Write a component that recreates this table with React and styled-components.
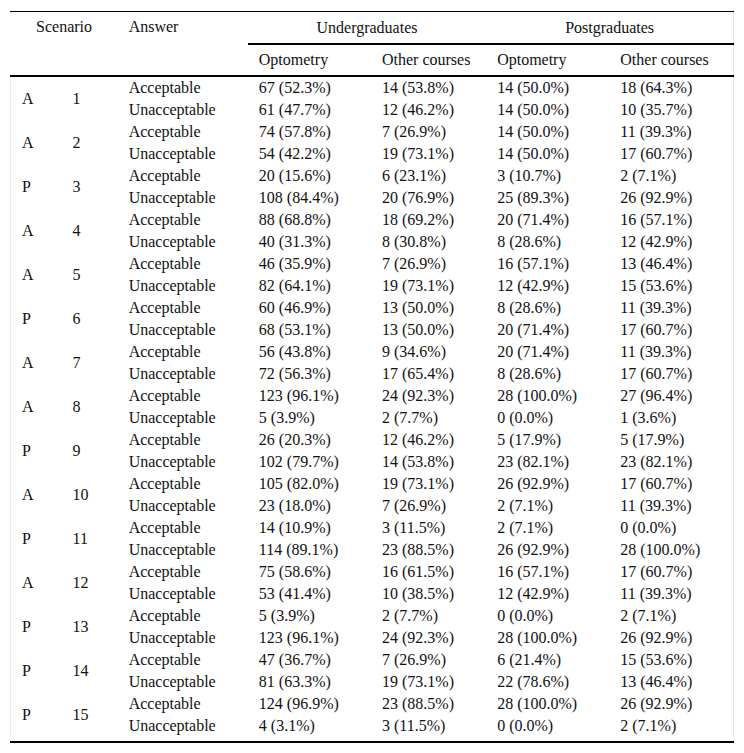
import React from 'react';
import styled, {createGlobalStyle} from 'styled-components';

const GlobalStyle = createGlobalStyle`
  body {
    margin: 0;
    background: #fff;
    font-family: "Liberation Serif", "Times New Roman", serif;
    color: #111;
  }
`;

const rows = [
  ['A', 1, ['67 (52.3%)', '14 (53.8%)', '14 (50.0%)', '18 (64.3%)'], ['61 (47.7%)', '12 (46.2%)', '14 (50.0%)', '10 (35.7%)']],
  ['A', 2, ['74 (57.8%)', '7 (26.9%)', '14 (50.0%)', '11 (39.3%)'], ['54 (42.2%)', '19 (73.1%)', '14 (50.0%)', '17 (60.7%)']],
  ['P', 3, ['20 (15.6%)', '6 (23.1%)', '3 (10.7%)', '2 (7.1%)'], ['108 (84.4%)', '20 (76.9%)', '25 (89.3%)', '26 (92.9%)']],
  ['A', 4, ['88 (68.8%)', '18 (69.2%)', '20 (71.4%)', '16 (57.1%)'], ['40 (31.3%)', '8 (30.8%)', '8 (28.6%)', '12 (42.9%)']],
  ['A', 5, ['46 (35.9%)', '7 (26.9%)', '16 (57.1%)', '13 (46.4%)'], ['82 (64.1%)', '19 (73.1%)', '12 (42.9%)', '15 (53.6%)']],
  ['P', 6, ['60 (46.9%)', '13 (50.0%)', '8 (28.6%)', '11 (39.3%)'], ['68 (53.1%)', '13 (50.0%)', '20 (71.4%)', '17 (60.7%)']],
  ['A', 7, ['56 (43.8%)', '9 (34.6%)', '20 (71.4%)', '11 (39.3%)'], ['72 (56.3%)', '17 (65.4%)', '8 (28.6%)', '17 (60.7%)']],
  ['A', 8, ['123 (96.1%)', '24 (92.3%)', '28 (100.0%)', '27 (96.4%)'], ['5 (3.9%)', '2 (7.7%)', '0 (0.0%)', '1 (3.6%)']],
  ['P', 9, ['26 (20.3%)', '12 (46.2%)', '5 (17.9%)', '5 (17.9%)'], ['102 (79.7%)', '14 (53.8%)', '23 (82.1%)', '23 (82.1%)']],
  ['A', 10, ['105 (82.0%)', '19 (73.1%)', '26 (92.9%)', '17 (60.7%)'], ['23 (18.0%)', '7 (26.9%)', '2 (7.1%)', '11 (39.3%)']],
  ['P', 11, ['14 (10.9%)', '3 (11.5%)', '2 (7.1%)', '0 (0.0%)'], ['114 (89.1%)', '23 (88.5%)', '26 (92.9%)', '28 (100.0%)']],
  ['A', 12, ['75 (58.6%)', '16 (61.5%)', '16 (57.1%)', '17 (60.7%)'], ['53 (41.4%)', '10 (38.5%)', '12 (42.9%)', '11 (39.3%)']],
  ['P', 13, ['5 (3.9%)', '2 (7.7%)', '0 (0.0%)', '2 (7.1%)'], ['123 (96.1%)', '24 (92.3%)', '28 (100.0%)', '26 (92.9%)']],
  ['P', 14, ['47 (36.7%)', '7 (26.9%)', '6 (21.4%)', '15 (53.6%)'], ['81 (63.3%)', '19 (73.1%)', '22 (78.6%)', '13 (46.4%)']],
  ['P', 15, ['124 (96.9%)', '23 (88.5%)', '28 (100.0%)', '26 (92.9%)'], ['4 (3.1%)', '3 (11.5%)', '0 (0.0%)', '2 (7.1%)']],
];

const widths = [51, 56, 130, 123, 115, 123, 124];

const Page = styled.div`
  padding: 11px 10px 12px 10px;
`;

const Frame = styled.div`
  width: 724px;
  box-sizing: border-box;
  border-top: 1px solid #000;
  border-bottom: 2px solid #000;
  padding-bottom: 4px;
`;

const Table = styled.table`
  width: 724px;
  border-collapse: collapse;
  table-layout: fixed;
  font-size: 16px;
`;

const HeadCell = styled.th`
  font-weight: normal;
  text-align: ${p => (p.$center ? 'center' : 'left')};
  height: ${p => (p.$short ? 30 : 31)}px;
  padding: ${p => (p.$top ? '6px 11px 0' : '0 11px')};
  vertical-align: ${p => (p.$top ? 'top' : 'middle')};
  border-bottom: ${p => (p.$line ? '2px solid #000' : 'none')};
  border-right: ${p => (p.$edge ? '1px solid #e6e6e6' : 'none')};
  white-space: nowrap;
`;

const Cell = styled.td`
  height: 22px;
  padding: 0 11px;
  line-height: 22px;
  vertical-align: middle;
  white-space: nowrap;
  border-left: ${p => (p.$first ? '1px solid #ececec' : 'none')};
  border-right: ${p => (p.$edge ? '1px solid #e6e6e6' : 'none')};
`;

const App = () => (
  <Page>
    <GlobalStyle />
    <Frame>
      <Table>
        <colgroup>
          {widths.map((w, i) => (
            <col key={i} style={{width: w}} />
          ))}
        </colgroup>
        <thead>
          <tr>
            <HeadCell colSpan={2} rowSpan={2} $center $line $top>Scenario</HeadCell>
            <HeadCell rowSpan={2} $line $top>Answer</HeadCell>
            <HeadCell colSpan={2} $center $line>Undergraduates</HeadCell>
            <HeadCell colSpan={2} $center $line $edge>Postgraduates</HeadCell>
          </tr>
          <tr>
            <HeadCell $line $short>Optometry</HeadCell>
            <HeadCell $line $short>Other courses</HeadCell>
            <HeadCell $line $short>Optometry</HeadCell>
            <HeadCell $line $short $edge>Other courses</HeadCell>
          </tr>
        </thead>
        <tbody>
          {rows.map(([kind, num, acc, unacc]) => (
            <React.Fragment key={num}>
              <tr>
                <Cell rowSpan={2} $first>{kind}</Cell>
                <Cell rowSpan={2}>{num}</Cell>
                <Cell>Acceptable</Cell>
                {acc.map((v, i) => (
                  <Cell key={i} $edge={i === 3}>{v}</Cell>
                ))}
              </tr>
              <tr>
                <Cell>Unacceptable</Cell>
                {unacc.map((v, i) => (
                  <Cell key={i} $edge={i === 3}>{v}</Cell>
                ))}
              </tr>
            </React.Fragment>
          ))}
        </tbody>
      </Table>
    </Frame>
  </Page>
);

export default App;
